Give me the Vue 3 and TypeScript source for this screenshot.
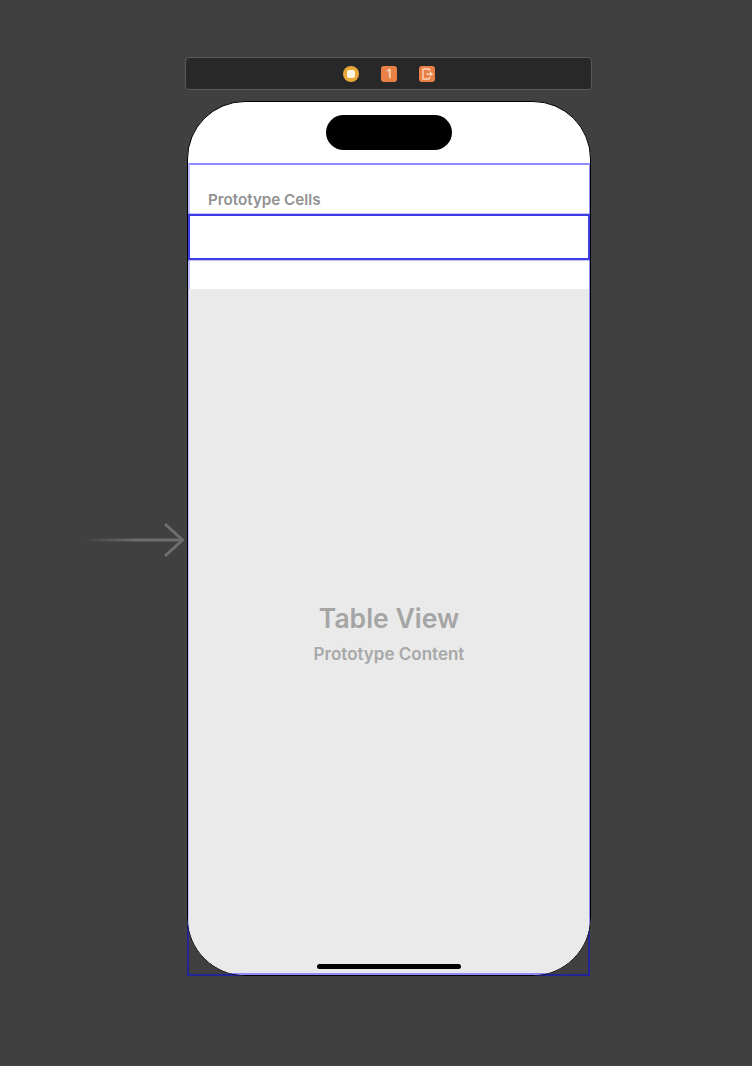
<script setup lang="ts">
const rows = [{ id: 'cell' }]
</script>

<template>
  <div class="canvas">
    <div class="scene">
      <div class="scene-bar">
        <span class="dock vc">
          <span class="vc-stop"></span>
        </span>
        <span class="dock tile">
          <span class="tile-num">1</span>
        </span>
        <span class="dock tile">
          <svg width="16" height="16" viewBox="0 0 16 16" fill="none">
            <path d="M10.5 5V3.6a.6 .6 0 0 0-.6-.6H4.6a.6 .6 0 0 0-.6 .6v8.8a.6 .6 0 0 0 .6 .6h5.3a.6 .6 0 0 0 .6-.6V11" stroke="#fbd5bd" stroke-width="1.4" />
            <path d="M7.5 8h4" stroke="#fbd5bd" stroke-width="1.6" />
            <path d="M11 5.4 14.2 8 11 10.6z" fill="#fbd5bd" />
          </svg>
        </span>
      </div>

      <div class="device-wrap">
        <div class="arrow">
          <svg width="104" height="36" viewBox="0 0 104 36" fill="none">
            <defs>
              <linearGradient id="tail" x1="0" x2="1" y1="0" y2="0">
                <stop offset="0" stop-color="#6e6e6e" stop-opacity="0" />
                <stop offset="0.55" stop-color="#6e6e6e" />
                <stop offset="1" stop-color="#6e6e6e" />
              </linearGradient>
            </defs>
            <rect x="0" y="16.6" width="101" height="2.8" fill="url(#tail)" />
            <path d="M83 2 L100.5 18 L83 34" stroke="#6e6e6e" stroke-width="3" />
          </svg>
        </div>
        <div class="bounds"></div>
        <div class="device">
          <div class="status">
            <div class="island"></div>
          </div>
          <div class="table">
            <div class="section-title">Prototype Cells</div>
            <div v-for="row in rows" :key="row.id" class="cell"></div>
            <div class="gap"></div>
            <div class="content">
              <div class="content-title">Table View</div>
              <div class="content-sub">Prototype Content</div>
            </div>
          </div>
          <div class="home"></div>
        </div>
      </div>
    </div>
  </div>
</template>

<style>
html,
body {
  margin: 0;
  background: #404040;
}
</style>

<style scoped>
.canvas {
  width: 752px;
  height: 1066px;
  background: #404040;
  overflow: hidden;
  font-family: Inter, 'Liberation Sans', sans-serif;
}

.scene {
  width: 407px;
  margin-left: 185px;
  padding-top: 57px;
}

.scene-bar {
  box-sizing: border-box;
  height: 33px;
  padding-left: 1px;
  background: #282828;
  border: 1px solid #5a5a5a;
  border-radius: 4px;
  display: flex;
  align-items: center;
  justify-content: center;
  gap: 22px;
}

.dock {
  width: 16px;
  height: 16px;
  display: flex;
  align-items: center;
  justify-content: center;
}

.vc {
  border-radius: 50%;
  background: #e9a93a;
}

.vc-stop {
  width: 8px;
  height: 8px;
  border-radius: 2px;
  background: #fff6e2;
}

.tile {
  border-radius: 3px;
  background: #e98147;
}

.tile-num {
  color: #fde6d6;
  font-size: 12px;
  font-weight: 500;
  line-height: 1;
}

.device-wrap {
  position: relative;
  margin-top: 11px;
  margin-left: 2px;
  width: 404px;
  height: 875px;
}

.arrow {
  position: absolute;
  left: -105px;
  top: 421px;
  line-height: 0;
}

.bounds {
  position: absolute;
  left: 0;
  top: 62px;
  width: 403px;
  height: 813px;
  box-sizing: border-box;
  border: 2px solid #23239a;
}

.device {
  position: relative;
  box-sizing: border-box;
  width: 404px;
  height: 875px;
  border: 1px solid #000;
  border-radius: 58px;
  background: #fff;
  overflow: hidden;
  display: flex;
  flex-direction: column;
}

.status {
  flex: 0 0 61px;
  display: flex;
  justify-content: center;
  align-items: flex-start;
  padding-top: 13px;
  box-sizing: border-box;
}

.island {
  width: 126px;
  height: 35px;
  border-radius: 18px;
  background: #000;
}

.table {
  flex: 1;
  display: flex;
  flex-direction: column;
  box-sizing: border-box;
  border: 2px solid #8c8cff;
  border-left-color: #bcbcff;
  margin-right: -1px;
}

.section-title {
  height: 49px;
  box-sizing: border-box;
  padding: 26px 0 0 18px;
  font-size: 15.2px;
  line-height: 18px;
  font-weight: 600;
  color: #919191;
}

.cell {
  height: 46px;
  box-sizing: border-box;
  border: 2px solid #3d3de6;
  box-shadow: 0 0 0 1px rgba(61, 61, 230, 0.3);
  margin-left: -2px;
  margin-right: -1px;
}

.gap {
  height: 29px;
}

.content {
  flex: 1;
  margin-left: -1px;
  background: #eaeaea;
  display: flex;
  flex-direction: column;
  align-items: center;
  padding-top: 312px;
}

.content-title {
  font-size: 26.5px;
  line-height: 34px;
  font-weight: 600;
  color: #a5a5a5;
}

.content-sub {
  margin-top: 9px;
  font-size: 17px;
  line-height: 20px;
  font-weight: 600;
  color: #a8a8a8;
}

.home {
  position: absolute;
  left: 129px;
  bottom: 6px;
  width: 144px;
  height: 5px;
  border-radius: 3px;
  background: #000;
}
</style>
